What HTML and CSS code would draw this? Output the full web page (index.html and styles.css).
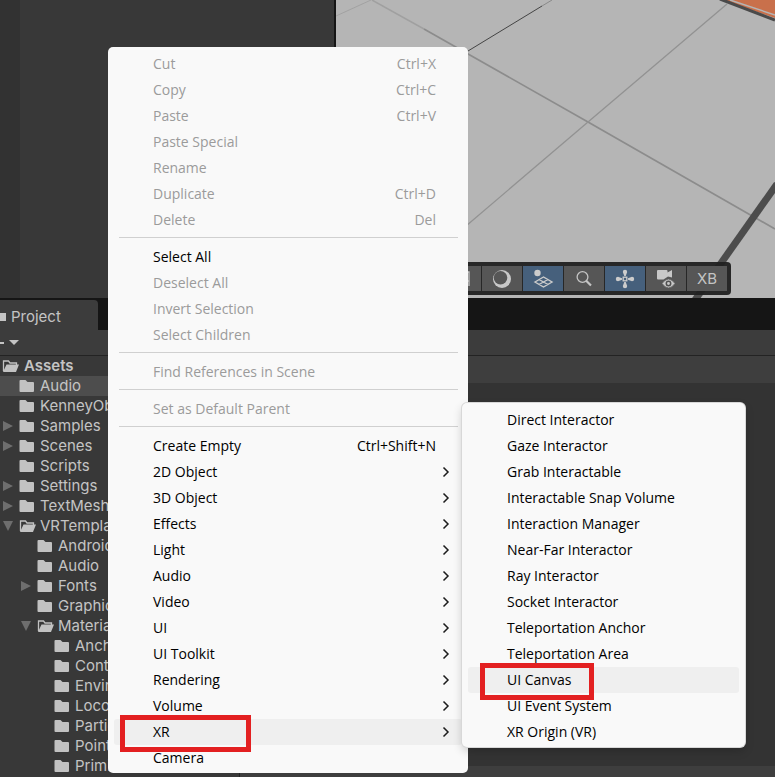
FILE: index.html
```html
<!DOCTYPE html>
<html lang="en">
<head>
<meta charset="utf-8">
<title>Editor</title>
<link rel="stylesheet" href="styles.css">
</head>
<body>
<svg class="defs" aria-hidden="true">
  <symbol id="folder" viewBox="0 0 16 14"><path d="M1.500 1h5l2 2h5.500q1 0 1 1v8q0 1-1 1H1.500q-1 0-1-1V2q0-1 1-1z" fill="#c2c2c2"/></symbol>
  <symbol id="folder-open" viewBox="0 0 18 14"><path d="M1.500 12V2h5l1.500 2h6.500v2" fill="none" stroke="#c2c2c2" stroke-width="1.300"/><path d="M4.500 5.500H17L14 13H1z" fill="#c2c2c2"/></symbol>
  <symbol id="chevron" viewBox="0 0 8 12"><path d="M1.500 1.500l4.500 4.500-4.500 4.500" fill="none" stroke="#1c1c1c" stroke-width="1.500"/></symbol>
</svg>
<main class="editor">
  <section class="upper">
    <div class="hierarchy"></div>
    <div class="scene">
      <svg class="floor" viewBox="0 0 439 298" preserveAspectRatio="xMinYMin slice" aria-hidden="true">
        <rect width="439" height="298" fill="#b5b5b5"/>
        <g fill="none">
          <path d="M0 16L35 0" stroke="#a2a2a2"/>
          <path d="M36 0L88 29" stroke="#a0a0a0" stroke-width="1.500"/>
          <path d="M88 29L252 122L439 229" stroke="#8c8c8c" stroke-width="1.700"/>
          <path d="M391 4L252 122L130 226" stroke="#929292" stroke-width="1.300"/>
          <path d="M206 6L216 0" stroke="#8a8a8a"/>
          <path d="M206 6L132 51" stroke="#444"/>
          <path d="M441 184L359 300" stroke="#4c4c4c" stroke-width="7"/>
        </g>
        <path d="M386 0H439V18z" fill="#c9704b"/>
        <path d="M394 0L439 15" stroke="#b5b5b5" stroke-width="1.500"/>
        <path d="M384 -1L439 20" stroke="#4a4a4a" stroke-width="3"/>
      </svg>
      <div class="scene-tools">
        <button aria-label="Draw mode"><svg width="22" height="20" viewBox="0 0 22 20"><path d="M13 3h6v14M16 8v8M19 12h-6" fill="none" stroke="#c4c4c4" stroke-width="1.300"/></svg></button>
        <button aria-label="Lighting"><svg width="22" height="20" viewBox="0 0 22 20"><circle cx="11" cy="10" r="9" fill="#c8c8c8"/><circle cx="9.500" cy="8.800" r="6.800" fill="#565656"/></svg></button>
        <button class="on" aria-label="Grid and effects"><svg width="22" height="20" viewBox="0 0 22 20"><circle cx="5.500" cy="4" r="3.200" fill="#ccc"/><path d="M3 13L11.500 8l8.500 5-8.500 5zM7 10.500l9 5M16 10.500l-9 5" fill="none" stroke="#ccc" stroke-width="1.400"/></svg></button>
        <button aria-label="Search scene"><svg width="22" height="20" viewBox="0 0 22 20"><circle cx="9.500" cy="8" r="5.400" fill="none" stroke="#c4c4c4" stroke-width="1.300"/><path d="M13 11.500l5 5" stroke="#c4c4c4" stroke-width="2.200"/></svg></button>
        <button class="on" aria-label="Gizmos"><svg width="22" height="20" viewBox="0 0 22 20"><g fill="#ccc"><path d="M8.800 3a2.200 2.200 0 0 1 4.400 0L11.700 7h-1.400zM8.800 17a2.200 2.200 0 0 0 4.400 0L11.700 13h-1.400zM4 7.800a2.200 2.200 0 0 0 0 4.400L8 10.700V9.300zM18 7.800a2.200 2.200 0 0 1 0 4.400L14 10.700V9.300z"/></g><rect x="9.200" y="8.200" width="3.600" height="3.600" fill="none" stroke="#ccc" stroke-width="1.300"/></svg></button>
        <button aria-label="Camera visibility"><svg width="22" height="20" viewBox="0 0 22 20"><path d="M2 2q0-1 1-1h8.500q1 0 1 1v1.500L17 1v7.500l-4-1-4.500 3H3q-1 0-1-1z" fill="#c8c8c8"/><path d="M7 14.500q6.500-9 13 0q-6.500 9-13 0z" fill="#c8c8c8" stroke="#565656" stroke-width=".8"/><circle cx="13.500" cy="14.500" r="2.200" fill="#c8c8c8" stroke="#505050" stroke-width="1.500"/></svg></button>
        <button>XB</button>
      </div>
    </div>
  </section>
  <section class="project">
    <div class="tabs"><div class="tab"><i></i>Project</div></div>
    <div class="toolbar"><i class="plus"></i><i class="drop"></i></div>
    <div class="panes">
      <ul class="tree">
        <li class="root"><svg class="open"><use href="#folder-open"/></svg>Assets</li>
        <li class="l1 selected"><svg><use href="#folder"/></svg>Audio</li>
        <li class="l1"><svg><use href="#folder"/></svg>KenneyObjects</li>
        <li class="l1 closed"><svg><use href="#folder"/></svg>Samples</li>
        <li class="l1 closed"><svg><use href="#folder"/></svg>Scenes</li>
        <li class="l1"><svg><use href="#folder"/></svg>Scripts</li>
        <li class="l1 closed"><svg><use href="#folder"/></svg>Settings</li>
        <li class="l1 closed"><svg><use href="#folder"/></svg>TextMesh Pro</li>
        <li class="l1 expanded"><svg class="open"><use href="#folder-open"/></svg>VRTemplateAssets</li>
        <li class="l2"><svg><use href="#folder"/></svg>Android</li>
        <li class="l2"><svg><use href="#folder"/></svg>Audio</li>
        <li class="l2 closed"><svg><use href="#folder"/></svg>Fonts</li>
        <li class="l2"><svg><use href="#folder"/></svg>Graphics</li>
        <li class="l2 expanded"><svg class="open"><use href="#folder-open"/></svg>Materials</li>
        <li class="l3"><svg><use href="#folder"/></svg>Anchor</li>
        <li class="l3"><svg><use href="#folder"/></svg>Controller</li>
        <li class="l3"><svg><use href="#folder"/></svg>Environment</li>
        <li class="l3"><svg><use href="#folder"/></svg>Locomotion</li>
        <li class="l3"><svg><use href="#folder"/></svg>Particles</li>
        <li class="l3"><svg><use href="#folder"/></svg>Point</li>
        <li class="l3"><svg><use href="#folder"/></svg>Primitive</li>
      </ul>
      <div class="assets"><div class="crumbs"></div><div class="grid"></div><div class="footer"></div></div>
    </div>
  </section>
</main>

<nav class="menu main-menu" aria-label="Context menu">
  <button disabled>Cut<span>Ctrl+X</span></button>
  <button disabled>Copy<span>Ctrl+C</span></button>
  <button disabled>Paste<span>Ctrl+V</span></button>
  <button disabled>Paste Special</button>
  <button disabled>Rename</button>
  <button disabled>Duplicate<span>Ctrl+D</span></button>
  <button disabled>Delete<span>Del</span></button>
  <hr>
  <button>Select All</button>
  <button disabled>Deselect All</button>
  <button disabled>Invert Selection</button>
  <button disabled>Select Children</button>
  <hr>
  <button disabled>Find References in Scene</button>
  <hr>
  <button disabled>Set as Default Parent</button>
  <hr>
  <button>Create Empty<span>Ctrl+Shift+N</span></button>
  <button>2D Object<svg><use href="#chevron"/></svg></button>
  <button>3D Object<svg><use href="#chevron"/></svg></button>
  <button>Effects<svg><use href="#chevron"/></svg></button>
  <button>Light<svg><use href="#chevron"/></svg></button>
  <button>Audio<svg><use href="#chevron"/></svg></button>
  <button>Video<svg><use href="#chevron"/></svg></button>
  <button>UI<svg><use href="#chevron"/></svg></button>
  <button>UI Toolkit<svg><use href="#chevron"/></svg></button>
  <button>Rendering<svg><use href="#chevron"/></svg></button>
  <button>Volume<svg><use href="#chevron"/></svg></button>
  <button class="hover marked">XR<svg><use href="#chevron"/></svg></button>
  <button>Camera</button>
</nav>
<nav class="menu sub-menu" aria-label="XR">
  <button>Direct Interactor</button>
  <button>Gaze Interactor</button>
  <button>Grab Interactable</button>
  <button>Interactable Snap Volume</button>
  <button>Interaction Manager</button>
  <button>Near-Far Interactor</button>
  <button>Ray Interactor</button>
  <button>Socket Interactor</button>
  <button>Teleportation Anchor</button>
  <button>Teleportation Area</button>
  <button class="hover marked">UI Canvas</button>
  <button>UI Event System</button>
  <button>XR Origin (VR)</button>
</nav>
</body>
</html>
```
FILE: styles.css
```css
*, ::before, ::after { box-sizing: border-box; }
body { margin: 0; background: #383838; overflow: hidden; }
button { font: inherit; border: 0; margin: 0; }
.defs { position: absolute; width: 0; height: 0; }

.editor { display: flex; flex-direction: column; height: 100vh; font: 15px/20px Inter, sans-serif; color: #c4c4c4; }
.upper { display: flex; flex: 0 0 298px; background: #151515; }
.hierarchy { flex: 0 0 334px; border-left: 20px solid #323232; background: #383838; }
.scene { position: relative; flex: 1; margin-left: 2px; overflow: hidden; }
.floor { display: block; width: 100%; height: 100%; }
.scene-tools { position: absolute; right: 44px; bottom: 3px; display: flex; gap: 1px; padding: 4px; border-radius: 4px; background: #202020f2; }
.scene-tools button { display: flex; align-items: center; justify-content: center; width: 40px; height: 25px; padding: 0; background: #565656; color: #c4c4c4; }
.scene-tools .on { background: #46607c; }

.project { display: flex; flex: 1; flex-direction: column; min-height: 0; background: #383838; }
.tabs { display: flex; flex: 0 0 32px; background: #151515; }
.tab { display: flex; align-items: center; gap: 5px; width: 98px; margin-top: 2px; padding-top: 3px; border-radius: 0 4px 0 0; background: #3c3c3c; }
.tab i { width: 6px; height: 8px; background: #c4c4c4; }
.toolbar { display: flex; align-items: center; gap: 5px; flex: 0 0 26px; border-bottom: 1px solid #232323; background: #3c3c3c; }
.plus { width: 4px; height: 2px; background: #c4c4c4; }
.drop { border: 5px solid transparent; border-top-color: #c4c4c4; border-bottom: 0; }
.panes { display: flex; flex: 1; min-height: 0; }
.tree { flex: 0 0 239px; margin: 0; padding: 0; overflow: hidden; list-style: none; }
.tree li { position: relative; display: flex; align-items: center; height: 20px; white-space: nowrap; }
.tree svg { flex: none; width: 16px; height: 14px; margin-right: 5px; }
.tree svg.open { width: 18px; margin-right: 3px; }
.tree .root { padding-left: 2px; font-weight: 600; }
.tree .root svg { margin-right: 4px; }
.tree .l1 { padding-left: 19px; }
.tree .l2 { padding-left: 37px; }
.tree .l3 { padding-left: 54px; }
.tree .selected { background: #4d4d4d; }
.closed::before, .expanded::before { content: ""; width: 10px; height: 10px; margin-left: -16px; margin-right: 6px; background: #6e6e6e; clip-path: polygon(0 0, 100% 50%, 0 100%); }
.expanded::before { clip-path: polygon(0 0, 100% 0, 50% 100%); }
.assets { display: flex; flex: 1; flex-direction: column; border-left: 1px solid #232323; }
.crumbs { flex: 0 0 27px; background: #3e3e3e; }
.grid { flex: 1; background: #333; }
.footer { flex: 0 0 11px; background: #3e3e3e; }

.menu { position: absolute; padding: 4px 6px 2px; border-radius: 5px; background: #f9f9f9; font: 14px/26px "Open Sans", sans-serif; color: #000; }
.menu button { position: relative; display: flex; align-items: center; justify-content: space-between; width: 100%; height: 26px; padding: 0 26px 0 39px; border-radius: 3px; background: none; color: inherit; text-align: left; white-space: nowrap; }
.menu button:disabled { color: #9b9b9b; }
.menu hr { height: 1px; margin: 4px 4px 6px 5px; border: 0; background: #d0d0d0; }
.menu svg { width: 8px; height: 12px; margin-right: -14px; }
.menu .hover { background: #efefef; }
.main-menu { left: 108px; top: 47px; width: 360px; }
.sub-menu { left: 462px; top: 403px; width: 283px; box-shadow: 0 0 0 1px #d8d8d8, 0 4px 10px #00000030; }
.menu .marked::after { content: ""; position: absolute; z-index: 1; left: 6px; top: -4px; width: 131px; height: 37px; border: 5px solid #e32021; }
.sub-menu .marked::after { left: 12px; width: 114px; }
```
